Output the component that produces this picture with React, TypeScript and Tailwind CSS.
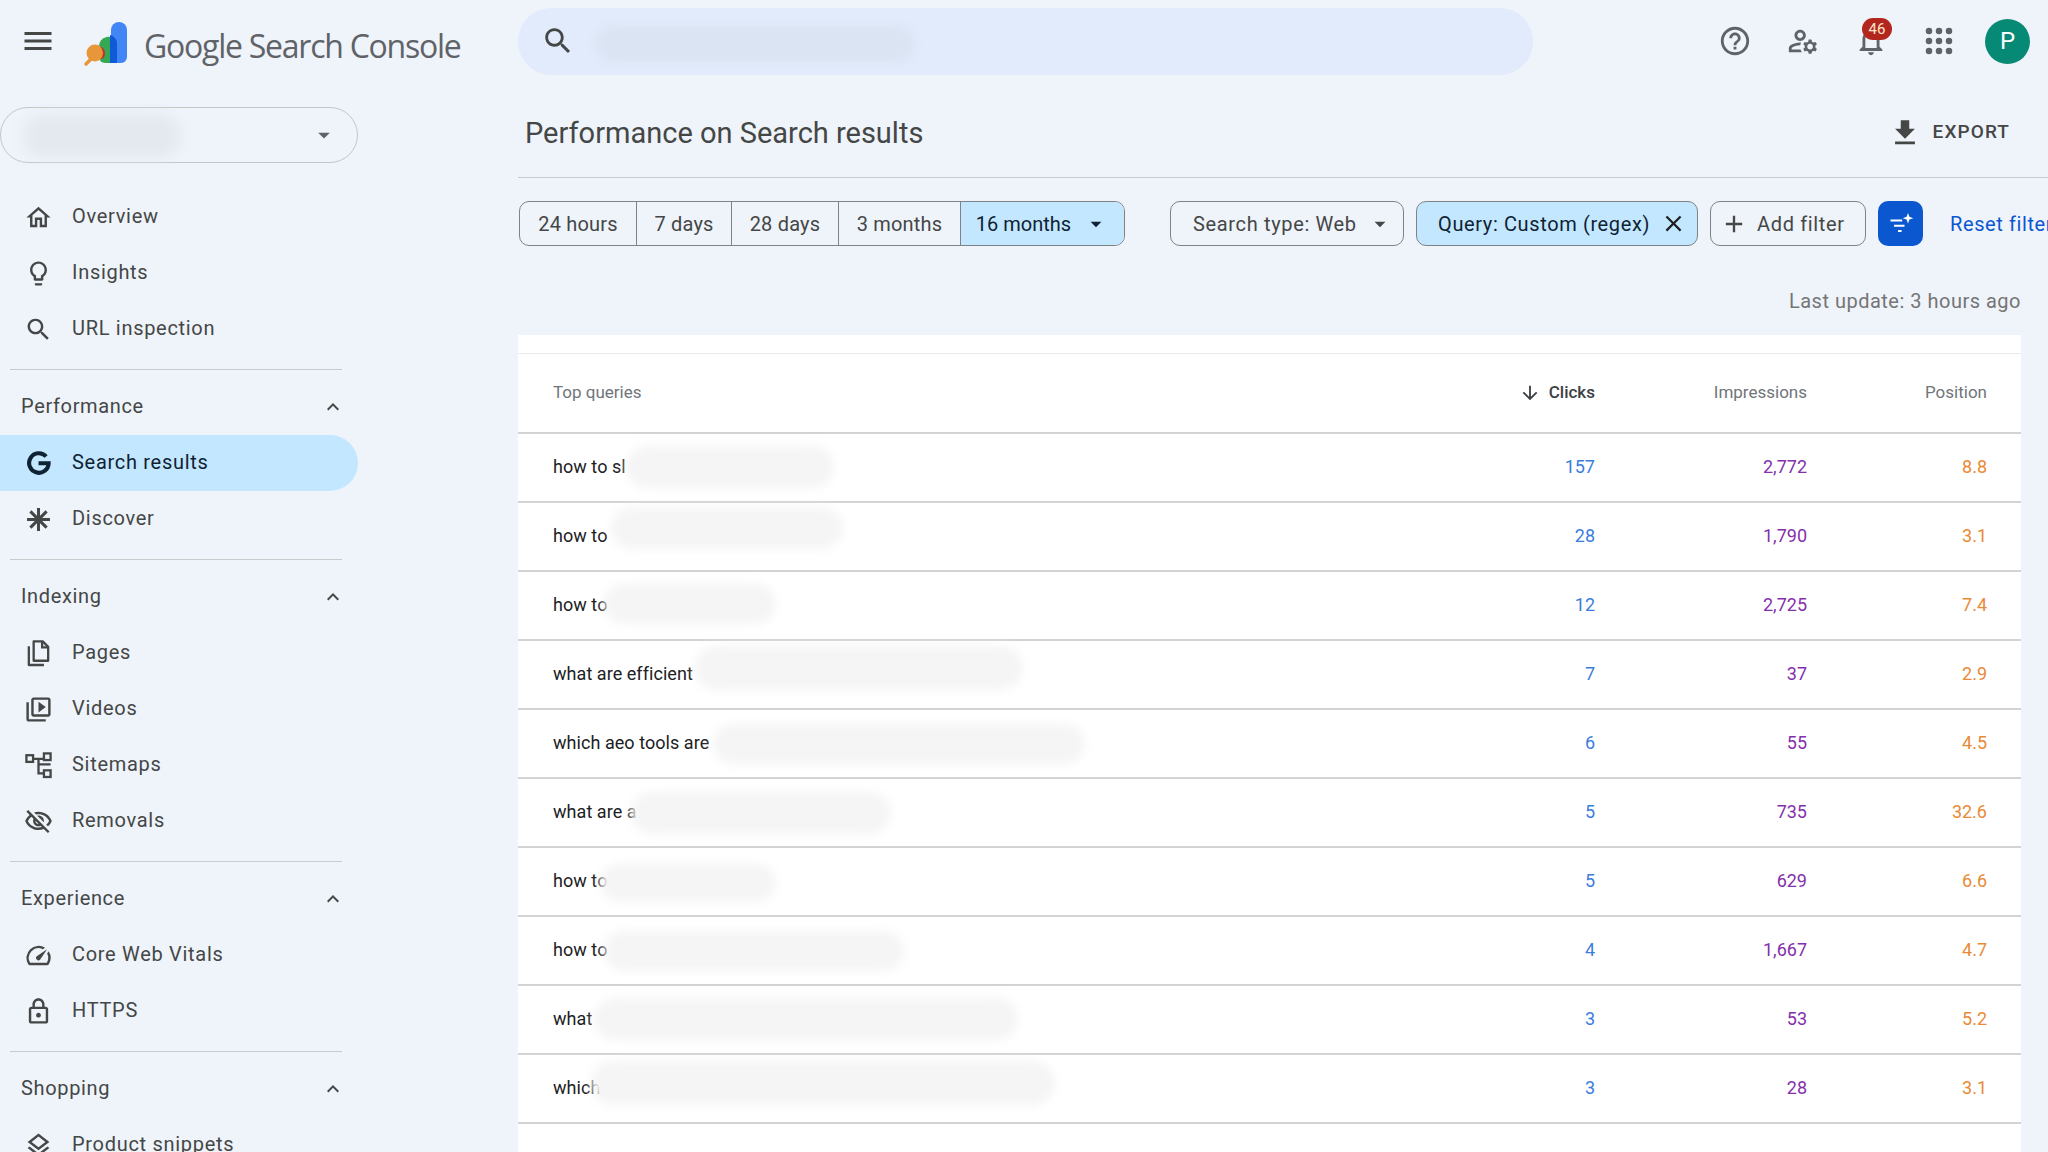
import React from "react";

const P = {
  menu: "M3 18h18v-2H3v2zm0-5h18v-2H3v2zm0-7v2h18V6H3z",
  home: "M12 5.69l5 4.5V18h-2v-6H9v6H7v-7.81l5-4.5M12 3L2 12h3v8h6v-6h2v6h6v-8h3L12 3z",
  bulb: "M9 21c0 .55.45 1 1 1h4c.55 0 1-.45 1-1v-1H9v1zm3-19C8.14 2 5 5.14 5 9c0 2.38 1.19 4.47 3 5.74V17c0 .55.45 1 1 1h6c.55 0 1-.45 1-1v-2.26c1.81-1.27 3-3.36 3-5.74 0-3.86-3.14-7-7-7zm2.85 11.1l-.85.6V16h-4v-2.3l-.85-.6C7.8 12.16 7 10.63 7 9c0-2.76 2.24-5 5-5s5 2.24 5 5c0 1.63-.8 3.16-2.15 4.1z",
  search: "M15.5 14h-.79l-.28-.27C15.41 12.59 16 11.11 16 9.5 16 5.91 13.09 3 9.5 3S3 5.91 3 9.5 5.91 16 9.5 16c1.61 0 3.09-.59 4.23-1.57l.27.28v.79l5 4.99L20.49 19l-4.99-5zm-6 0C7.01 14 5 11.99 5 9.5S7.01 5 9.5 5 14 7.01 14 9.5 11.99 14 9.5 14z",
  less: "M12 8l-6 6 1.41 1.41L12 10.83l4.59 4.58L18 14z",
  video: "M4 6H2v14c0 1.1.9 2 2 2h14v-2H4V6zm16-4H8c-1.1 0-2 .9-2 2v12c0 1.1.9 2 2 2h12c1.1 0 2-.9 2-2V4c0-1.1-.9-2-2-2zm0 14H8V4h12v12zM12 5.5v9l6-4.5z",
  eye: "M12 6c3.79 0 7.17 2.13 8.82 5.5-.59 1.22-1.42 2.27-2.41 3.12l1.41 1.41c1.39-1.23 2.49-2.77 3.18-4.53C21.27 7.11 17 4 12 4c-1.27 0-2.49.2-3.64.57l1.65 1.65C10.66 6.09 11.32 6 12 6zm-1.07 1.14L13 9.21c.57.25 1.03.71 1.28 1.28l2.07 2.07c.08-.34.14-.7.14-1.07C16.5 9.01 14.48 7 12 7c-.37 0-.72.05-1.07.14zM2.01 3.87l2.68 2.68C3.06 7.83 1.77 9.53 1 11.5 2.73 15.89 7 19 12 19c1.52 0 2.98-.29 4.32-.82l3.42 3.42 1.41-1.41L3.42 2.45 2.01 3.87zm7.5 7.5l2.61 2.61c-.04.01-.08.02-.12.02-1.38 0-2.5-1.12-2.5-2.5 0-.05.01-.08.01-.13zm-3.4-3.4l1.75 1.75c-.23.55-.36 1.15-.36 1.78 0 2.48 2.02 4.5 4.5 4.5.63 0 1.23-.13 1.77-.36l.98.98c-.88.24-1.8.38-2.75.38-3.79 0-7.17-2.13-8.82-5.5.7-1.43 1.72-2.61 2.93-3.53z",
  speed: "M20.38 8.57l-1.23 1.85a8 8 0 0 1-.22 7.58H5.07A8 8 0 0 1 15.58 6.85l1.85-1.23A10 10 0 0 0 3.35 19a2 2 0 0 0 1.72 1h13.85a2 2 0 0 0 1.74-1 10 10 0 0 0-.27-10.44zm-9.79 6.84a2 2 0 0 0 2.83 0l5.66-8.49-8.49 5.66a2 2 0 0 0 0 2.83z",
  lock: "M18 8h-1V6c0-2.76-2.24-5-5-5S7 3.24 7 6v2H6c-1.1 0-2 .9-2 2v10c0 1.1.9 2 2 2h12c1.1 0 2-.9 2-2V10c0-1.1-.9-2-2-2zM9 6c0-1.66 1.34-3 3-3s3 1.34 3 3v2H9V6zm9 14H6V10h12v10zm-6-3c1.1 0 2-.9 2-2s-.9-2-2-2-2 .9-2 2 .9 2 2 2z",
  layers: "M11.99 18.54l-7.37-5.73L3 14.07l9 7 9-7-1.63-1.27-7.38 5.74zM12 16l7.36-5.73L21 9l-9-7-9 7 1.63 1.27L12 16zm0-11.47L17.74 9 12 13.47 6.26 9 12 4.53z",
  help: "M11 18h2v-2h-2v2zm1-16C6.48 2 2 6.48 2 12s4.48 10 10 10 10-4.48 10-10S17.52 2 12 2zm0 18c-4.41 0-8-3.59-8-8s3.59-8 8-8 8 3.59 8 8-3.59 8-8 8zm0-14c-2.21 0-4 1.79-4 4h2c0-1.1.9-2 2-2s2 .9 2 2c0 2-3 1.75-3 5h2c0-2.25 3-2.5 3-5 0-2.21-1.79-4-4-4z",
  manage: "M4 18v-.65c0-.34.16-.66.41-.81C6.1 15.53 8.03 15 10 15c.03 0 .05 0 .08.01.1-.7.3-1.37.59-1.98-.22-.02-.44-.03-.67-.03-2.42 0-4.68.67-6.61 1.82-.88.52-1.39 1.5-1.39 2.53V20h9.26c-.42-.6-.75-1.28-.97-2H4zm6-6c2.21 0 4-1.79 4-4s-1.79-4-4-4-4 1.79-4 4 1.79 4 4 4zm0-6c1.1 0 2 .9 2 2s-.9 2-2 2-2-.9-2-2 .9-2 2-2zm10.75 10c0-.22-.03-.42-.06-.63l1.14-1.01-1-1.73-1.45.49c-.32-.27-.68-.48-1.08-.63L18 11h-2l-.3 1.49c-.4.15-.76.36-1.08.63l-1.45-.49-1 1.73 1.14 1.01c-.03.21-.06.41-.06.63s.03.42.06.63l-1.14 1.01 1 1.73 1.45-.49c.32.27.68.48 1.08.63L16 21h2l.3-1.49c.4-.15.76-.36 1.08-.63l1.45.49 1-1.73-1.14-1.01c.03-.21.06-.41.06-.63zM17 18c-1.1 0-2-.9-2-2s.9-2 2-2 2 .9 2 2-.9 2-2 2z",
  bell: "M12 22c1.1 0 2-.9 2-2h-4c0 1.1.9 2 2 2zm6-6v-5c0-3.07-1.63-5.64-4.5-6.32V4c0-.83-.67-1.5-1.5-1.5s-1.5.67-1.5 1.5v.68C7.64 5.36 6 7.92 6 11v5l-2 2v1h16v-1l-2-2zm-2 1H8v-6c0-2.48 1.51-4.5 4-4.5s4 2.02 4 4.5v6z",
  download: "M19 9h-4V3H9v6H5l7 7 7-7zM5 18v2h14v-2H5z",
  close: "M19 6.41L17.59 5 12 10.59 6.41 5 5 6.41 10.59 12 5 17.59 6.41 19 12 13.41 17.59 19 19 17.59 13.41 12z",
  add: "M19 13h-6v6h-2v-6H5v-2h6V5h2v6h6v2z",
  down: "M20 12l-1.41-1.41L13 16.17V4h-2v12.17l-5.58-5.59L4 12l8 8 8-8z",
  drop: "M7 10l5 5 5-5z",
};

function Ic({ d, className }: { d: string; className: string }) {
  return (
    <svg viewBox="0 0 24 24" fill="currentColor" className={className}>
      <path d={d} />
    </svg>
  );
}

function BoldG({ className }: { className: string }) {
  return (
    <svg viewBox="0 0 24 24" fill="none" stroke="currentColor" strokeWidth="3.8" className={className}>
      <path d="M19.500 6a9 9 0 1 0 2.300 6.200H12.500" />
    </svg>
  );
}

function Pages({ className }: { className: string }) {
  return (
    <svg viewBox="0 0 24 24" fill="none" stroke="currentColor" strokeWidth="1.9" className={className}>
      <path d="M8 2h7.500L20 6.500V18H8z" strokeLinejoin="round" />
      <path d="M15 2v5h5" />
      <path d="M4 6v15.500h12.500" strokeLinejoin="round" />
    </svg>
  );
}

function Sitemap({ className }: { className: string }) {
  return (
    <svg viewBox="0 0 24 24" fill="none" stroke="currentColor" strokeWidth="1.9" className={className}>
      <rect x="2" y="3.500" width="5.500" height="5.500" />
      <rect x="16.500" y="2" width="5.500" height="5.500" />
      <rect x="16.500" y="16" width="5.500" height="5.500" />
      <path d="M7.500 6.500h9M12 6.500v12h4.500M12 11h10" />
    </svg>
  );
}

function Star({ className }: { className: string }) {
  return (
    <svg viewBox="0 0 24 24" fill="none" stroke="currentColor" strokeWidth="2.900" className={className}>
      <path d="M12 1v22M1 12h22M4.200 4.200l15.600 15.600M19.800 4.200L4.200 19.800" />
    </svg>
  );
}

function Item({ icon, label, active }: { icon: React.ReactNode; label: string; active?: boolean }) {
  return (
    <div
      className={
        active
          ? "flex h-[56px] w-[358px] items-center rounded-r-full bg-[#c2e7ff] text-[#0f2233]"
          : "flex h-[56px] w-[358px] items-center text-[#444746]"
      }
    >
      <span className="flex w-[76px] shrink-0 justify-center">{icon}</span>
      <span className="-ml-[4px] pb-[2px] text-[20px] tracking-[0.7px]">{label}</span>
    </div>
  );
}

function Section({ label }: { label: string }) {
  return (
    <div className="flex h-[56px] w-[358px] items-center justify-between pl-[21px] pr-[13px] text-[#444746]">
      <span className="pb-[2px] text-[20px] tracking-[0.65px]">{label}</span>
      <Ic d={P.less} className="h-[24px] w-[24px]" />
    </div>
  );
}

function Divider() {
  return <div className="ml-[10px] mb-[9px] mt-[12px] h-px w-[332px] bg-[#c8cacc]" />;
}

const ic = "h-[29px] w-[29px]";

const rows = [
  { q: "how to sl", c: "157", i: "2,772", p: "8.8", b: "left-[108px] top-[12px] h-[42px] w-[208px]" },
  { q: "how to", c: "28", i: "1,790", p: "3.1", b: "left-[93px] top-[4px] h-[42px] w-[232px]" },
  { q: "how to", c: "12", i: "2,725", p: "7.4", b: "left-[86px] top-[12px] h-[40px] w-[172px]" },
  { q: "what are efficient", c: "7", i: "37", p: "2.9", b: "left-[177px] top-[5px] h-[44px] w-[328px]" },
  { q: "which aeo tools are", c: "6", i: "55", p: "4.5", b: "left-[195px] top-[14px] h-[40px] w-[372px]" },
  { q: "what are a", c: "5", i: "735", p: "32.6", b: "left-[113px] top-[13px] h-[42px] w-[260px]" },
  { q: "how to", c: "5", i: "629", p: "6.6", b: "left-[82px] top-[16px] h-[38px] w-[176px]" },
  { q: "how to", c: "4", i: "1,667", p: "4.7", b: "left-[86px] top-[14px] h-[40px] w-[300px]" },
  { q: "what", c: "3", i: "53", p: "5.2", b: "left-[76px] top-[12px] h-[42px] w-[424px]" },
  { q: "which", c: "3", i: "28", p: "3.1", b: "left-[73px] top-[6px] h-[44px] w-[464px]" },
];

const dates = [
  { t: "24 hours", w: "w-[117px]" },
  { t: "7 days", w: "w-[95px]" },
  { t: "28 days", w: "w-[107px]" },
  { t: "3 months", w: "w-[122px]" },
];

export default function App() {
  return (
    <div className="flex h-[1152px] w-[2048px] flex-col overflow-hidden bg-[#eff3fa] font-['Roboto',sans-serif]">
      <header className="relative flex h-[82px] shrink-0 items-center">
        <div className="flex w-[518px] shrink-0 items-center">
          <Ic d={P.menu} className="ml-[20px] h-[36px] w-[36px] text-[#444746]" />
          <svg viewBox="80 18 50 50" className="ml-[24px] mt-[4px] h-[50px] w-[50px]">
            <path d="M111 30a8 8 0 0 1 16 0v27a6 6 0 0 1-6 6h-10z" fill="#4285f4" />
            <path d="M99 46a9.500 9.500 0 0 1 18-4v21h-12a6 6 0 0 1-6-6z" fill="#34a853" />
            <path d="M110 35a9.500 9.500 0 0 1 7 7.500V63h-7z" fill="#0f5ad6" />
            <path d="M86 64l6-6" stroke="#e8963a" strokeWidth="3.500" strokeLinecap="round" />
            <circle cx="95" cy="53" r="8.500" fill="#e8963a" />
            <path d="M100 46.500a8.500 8.500 0 0 1 0 13c3-1 5-2 5-6s-2-6-5-7z" fill="#c5302a" />
          </svg>
          <span className="ml-[14px] mt-[9px] whitespace-nowrap font-['Open_Sans',sans-serif] text-[32px] tracking-[-1.25px] text-[#5f6368]">
            Google Search Console
          </span>
        </div>
        <div className="relative flex h-[67px] w-[1015px] shrink-0 items-center rounded-full bg-[#e1ebfb]">
          <Ic d={P.search} className="ml-[23px] h-[34px] w-[34px] text-[#444746]" />
          <div className="absolute left-[78px] top-[18px] h-[36px] w-[318px] rounded-full bg-[#dae4f3] blur-[4px]" />
        </div>
        <div className="ml-auto flex items-center pr-[18px]">
          <span className="flex w-[68px] justify-center text-[#5f6368]"><Ic d={P.help} className="h-[34px] w-[34px]" /></span>
          <span className="flex w-[68px] justify-center text-[#5f6368]"><Ic d={P.manage} className="h-[34px] w-[34px]" /></span>
          <span className="relative flex w-[68px] justify-center text-[#5f6368]">
            <Ic d={P.bell} className="h-[34px] w-[34px]" />
            <span className="absolute left-[25px] top-[-6px] flex h-[22px] w-[30px] items-center justify-center rounded-full bg-[#b3261e] text-[15px] text-[#fde9d0]">46</span>
          </span>
          <span className="flex w-[68px] justify-center text-[#5f6368]">
            <svg viewBox="0 0 24 24" fill="currentColor" className="h-[30px] w-[30px]">
              {[4, 12, 20].map((y) =>
                [4, 12, 20].map((x) => <circle key={`${x}-${y}`} cx={x} cy={y} r="2.600" />)
              )}
            </svg>
          </span>
          <span className="ml-[12px] flex h-[45px] w-[45px] items-center justify-center rounded-full bg-[#078a75] text-[24px] text-white">P</span>
        </div>
      </header>

      <div className="flex min-h-0 flex-1">
        <aside className="w-[518px] shrink-0">
          <div className="relative mb-[26px] mt-[25px] flex h-[56px] w-[358px] items-center justify-end rounded-full border border-[#c4c7c5] pr-[19px]">
            <div className="absolute left-[22px] top-[6px] h-[44px] w-[158px] rounded-full bg-[#e4e9f0] blur-[6px]" />
            <Ic d={P.drop} className="h-[28px] w-[28px] text-[#5f6368]" />
          </div>
          <Item icon={<Ic d={P.home} className={ic} />} label="Overview" />
          <Item icon={<Ic d={P.bulb} className={ic} />} label="Insights" />
          <Item icon={<Ic d={P.search} className={ic} />} label="URL inspection" />
          <Divider />
          <Section label="Performance" />
          <Item active icon={<BoldG className="h-[26px] w-[26px]" />} label="Search results" />
          <Item icon={<Star className="h-[25px] w-[25px]" />} label="Discover" />
          <Divider />
          <Section label="Indexing" />
          <Item icon={<Pages className={ic} />} label="Pages" />
          <Item icon={<Ic d={P.video} className={ic} />} label="Videos" />
          <Item icon={<Sitemap className={ic} />} label="Sitemaps" />
          <Item icon={<Ic d={P.eye} className={ic} />} label="Removals" />
          <Divider />
          <Section label="Experience" />
          <Item icon={<Ic d={P.speed} className={ic} />} label="Core Web Vitals" />
          <Item icon={<Ic d={P.lock} className={ic} />} label="HTTPS" />
          <Divider />
          <Section label="Shopping" />
          <Item icon={<Ic d={P.layers} className={ic} />} label="Product snippets" />
        </aside>

        <main className="flex min-w-0 flex-1 flex-col overflow-hidden">
          <div className="flex h-[96px] shrink-0 items-center justify-between border-b border-[#c8cacc] pl-[7px] pr-[38px] pt-[6px]">
            <h1 className="pt-[3px] text-[29px] font-normal tracking-[0px] text-[#444746]">Performance on Search results</h1>
            <div className="flex items-center text-[#444746]">
              <Ic d={P.download} className="h-[34px] w-[34px]" />
              <span className="ml-[11px] text-[19px] font-medium tracking-[1.1px]">EXPORT</span>
            </div>
          </div>

          <div className="mt-[23px] flex h-[45px] shrink-0 items-stretch whitespace-nowrap pl-px text-[20px] text-[#444746]">
            <div className="flex shrink-0 items-stretch overflow-hidden rounded-[10px] border border-[#808385] tracking-[0.2px]">
              {dates.map((d) => (
                <span key={d.t} className={`flex items-center justify-center border-r border-[#808385] ${d.w}`}>{d.t}</span>
              ))}
              <span className="flex w-[163px] items-center justify-center bg-[#c2e7ff] text-[#0f2233] tracking-normal">
                16 months
                <Ic d={P.drop} className="ml-[12px] h-[26px] w-[26px]" />
              </span>
            </div>
            <div className="ml-[23px] mr-[22px] my-[2px] w-px bg-[#c8cacc]" />
            <span className="flex w-[234px] shrink-0 items-center justify-between rounded-[10px] border border-[#808385] pl-[22px] pr-[10px] tracking-[0.65px]">
              Search type: Web
              <Ic d={P.drop} className="h-[26px] w-[26px]" />
            </span>
            <span className="ml-[12px] flex w-[282px] shrink-0 items-center justify-between rounded-[10px] border border-[#808385] bg-[#c2e7ff] pl-[21px] pr-[10px] tracking-[0.62px] text-[#0f2233]">
              Query: Custom (regex)
              <Ic d={P.close} className="h-[27px] w-[27px] text-[#1f1f1f]" />
            </span>
            <span className="ml-[12px] flex w-[156px] shrink-0 items-center rounded-[10px] border border-[#808385] pl-[9px]">
              <Ic d={P.add} className="h-[28px] w-[28px]" />
              <span className="ml-[9px] tracking-[0.65px]">Add filter</span>
            </span>
            <span className="ml-[12px] flex w-[45px] shrink-0 items-center justify-center rounded-[10px] bg-[#0b57d0]">
              <svg viewBox="0 0 24 24" fill="none" stroke="white" strokeWidth="1.800" className="h-[28px] w-[28px]">
                <path d="M3 9h10M6 13.500h9M9.500 18h3" />
                <path d="M18 2.500l1.200 3.300 3.300 1.200-3.300 1.200L18 11.500l-1.200-3.300L13.500 7l3.300-1.200z" fill="white" stroke="none" />
              </svg>
            </span>
            <span className="ml-[27px] flex items-center tracking-[0.6px] text-[#0b57d0]">Reset filters</span>
          </div>

          <div className="flex h-[89px] shrink-0 items-center justify-end pr-[27px] pt-[21px] text-[20px] tracking-[0.5px] text-[#757575]">
            Last update: 3 hours ago
          </div>

          <div className="mr-[27px] flex flex-1 flex-col bg-white">
            <div className="h-[19px] shrink-0 border-b border-[#ebebeb]" />
            <div className="flex h-[80px] shrink-0 items-center border-b-2 border-[#d2d3d5] pl-[35px] pr-[34px] text-[17px] text-[#70757a]">
              <span className="flex-1">Top queries</span>
              <span className="flex w-[160px] items-center justify-end font-medium text-[#3c4043]">
                <Ic d={P.down} className="mr-[8px] h-[22px] w-[22px]" />
                Clicks
              </span>
              <span className="w-[212px] text-right">Impressions</span>
              <span className="w-[180px] text-right">Position</span>
            </div>
            {rows.map((r) => (
              <div key={r.q + r.c + r.i} className="relative flex h-[69px] shrink-0 items-center border-b-2 border-[#d2d3d5] pb-[2px] pl-[35px] pr-[34px] text-[18px]">
                <span className="flex-1 tracking-[0.05px] text-[#202124]">{r.q}</span>
                <span className="w-[160px] text-right text-[#3b7ddd]">{r.c}</span>
                <span className="w-[212px] text-right text-[#8430ab]">{r.i}</span>
                <span className="w-[180px] text-right text-[#e98a36]">{r.p}</span>
                <div className={`absolute rounded-full bg-[#f5f5f6] blur-[5px] ${r.b}`} />
              </div>
            ))}
          </div>
        </main>
      </div>
    </div>
  );
}
